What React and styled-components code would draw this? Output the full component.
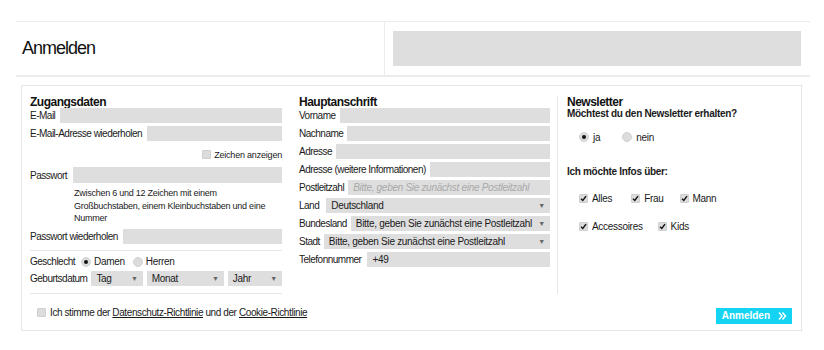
import React, { useState } from "react";
import styled, { createGlobalStyle } from "styled-components";

const GlobalStyle = createGlobalStyle`
  * { box-sizing: border-box; }
  body {
    margin: 0;
    background: #fff;
    font-family: "Liberation Sans", Arial, sans-serif;
    color: #1a1a1a;
  }
`;

const Page = styled.div`
  width: 824px;
  padding: 21px 14px 0 16px;
`;

// kopfzeile mit titel und grauem balken
const Header = styled.div`
  display: flex;
  height: 56px;
  border-top: 1px solid #ececec;
  border-bottom: 2px solid #ececec;
`;

const HeaderTitle = styled.div`
  width: 369px;
  display: flex;
  align-items: center;
  padding-left: 6px;
  font-size: 18px;
  letter-spacing: -1px;
  color: #111;
  border-right: 1px solid #ececec;
`;

const HeaderSlot = styled.div`
  flex: 1;
  padding: 9px 9px 9px 8px;
`;

const GreyBar = styled.div`
  height: 100%;
  background: #dedede;
`;

const Panel = styled.div`
  margin: 8px 8px 0 5px;
  border: 1px solid #e6e6e6;
  padding: 10px 9px 6px 8px;
`;

const Columns = styled.div`
  display: grid;
  grid-template-columns: 252px 251px 1fr;
  column-gap: 17px;
`;

const Column = styled.div`
  display: flex;
  flex-direction: column;
  ${(p) =>
    p.$divided &&
    `
    border-left: 1px solid #e6e6e6;
    margin-left: -10px;
    padding-left: 9px;
  `}
`;

const Heading = styled.div`
  font-size: 12px;
  font-weight: bold;
  letter-spacing: -0.5px;
  line-height: 12px;
  height: 12px;
  color: #111;
`;

const Row = styled.div`
  display: flex;
  align-items: center;
  gap: ${(p) => p.$gap ?? 5}px;
  height: ${(p) => p.$h ?? 15}px;
  margin-bottom: 3px;
`;

const Label = styled.span`
  font-size: 10px;
  letter-spacing: -0.5px;
  white-space: nowrap;
  color: #1a1a1a;
`;

const Field = styled.input`
  flex: 1;
  min-width: 0;
  height: 100%;
  border: 0;
  outline: 0;
  background: #dedede;
  padding: 0 5px;
  font-family: inherit;
  font-size: 10px;
  letter-spacing: -0.3px;
  color: #222;

  &::placeholder {
    font-style: italic;
    color: #a9a9a9;
  }
`;

const SelectBox = styled.div`
  display: flex;
  align-items: center;
  justify-content: space-between;
  height: 100%;
  background: #dedede;
  padding: 0 5px 0 5px;
  font-size: 10px;
  letter-spacing: -0.3px;
  color: #1a1a1a;
  white-space: nowrap;
  ${(p) => (p.$w ? `width: ${p.$w}px;` : "flex: 1; min-width: 0;")}

  &::after {
    content: "▼";
    font-size: 7px;
    color: #666;
    margin-left: 4px;
  }
`;

const Select = ({ children, w }) => <SelectBox $w={w}>{children}</SelectBox>;

const ShowRow = styled.div`
  display: flex;
  justify-content: flex-end;
  align-items: center;
  gap: 3px;
  margin: 4px 0 6px;
  height: 13px;
`;

const SmallText = styled.span`
  font-size: 9px;
  letter-spacing: -0.2px;
  color: #1a1a1a;
`;

const Help = styled.div`
  margin: 1px 0 4px 44px;
  font-size: 9px;
  letter-spacing: -0.25px;
  line-height: 12.5px;
  color: #1a1a1a;
`;

const Divider = styled.div`
  height: 1px;
  background: #e6e6e6;
  margin: ${(p) => p.$m || "5px 0 6px"};
`;

const Box = styled.span`
  display: inline-flex;
  align-items: center;
  justify-content: center;
  width: 9px;
  height: 9px;
  background: #dcdcdc;
  border: 1px solid #d0d0d0;
  border-radius: 1px;
  flex: none;
`;

const Check = ({ on }) => (
  <Box>
    {on && (
      <svg width="7" height="7" viewBox="0 0 7 7">
        <path d="M1 3.8 L2.8 5.5 L6 1.2" fill="none" stroke="#111" strokeWidth="1.4" />
      </svg>
    )}
  </Box>
);

const RadioDot = styled.span`
  display: inline-flex;
  align-items: center;
  justify-content: center;
  width: 10px;
  height: 10px;
  border-radius: 50%;
  background: #dcdcdc;
  border: 1px solid #d2d2d2;
  flex: none;

  &::after {
    content: "";
    width: 4px;
    height: 4px;
    border-radius: 50%;
    background: ${(p) => (p.$on ? "#111" : "transparent")};
  }
`;

const Option = styled.label`
  display: inline-flex;
  align-items: center;
  gap: ${(p) => p.$gap ?? 4}px;
  font-size: 10px;
  letter-spacing: -0.3px;
  margin-right: ${(p) => p.$mr ?? 0}px;
  cursor: pointer;
`;

const Question = styled.div`
  font-size: 10px;
  font-weight: bold;
  letter-spacing: -0.3px;
  margin-top: ${(p) => p.$mt ?? 0}px;
  height: 12px;
  line-height: 12px;
`;

const OptionLine = styled.div`
  display: flex;
  align-items: center;
  padding-left: 12px;
  height: 12px;
  margin-top: ${(p) => p.$mt}px;
`;

const Footer = styled.div`
  display: flex;
  align-items: center;
  justify-content: space-between;
  height: 30px;
  padding: 8px 0 0 7px;
`;

const Consent = styled.div`
  display: flex;
  align-items: center;
  gap: 4px;
  font-size: 10px;
  letter-spacing: -0.4px;

  a {
    color: #1a1a1a;
    text-decoration: underline;
  }
`;

const SubmitButton = styled.button`
  display: flex;
  align-items: center;
  gap: 8px;
  height: 16px;
  margin-top: 6px;
  padding: 0 5px 0 6px;
  border: 0;
  background: #15d3f3;
  color: #fff;
  font-family: "Liberation Sans", Arial, sans-serif;
  font-size: 10px;
  font-weight: bold;
  cursor: pointer;
`;

export default function App() {
  const [gender, setGender] = useState("damen");
  const [news, setNews] = useState("ja");

  return (
    <>
      <GlobalStyle />
      <Page>
        <Header>
          <HeaderTitle>Anmelden</HeaderTitle>
          <HeaderSlot>
            <GreyBar />
          </HeaderSlot>
        </Header>

        <Panel>
          <Columns>
            <Column>
              <Heading>Zugangsdaten</Heading>
              <Row>
                <Label>E-Mail</Label>
                <Field />
              </Row>
              <Row>
                <Label>E-Mail-Adresse wiederholen</Label>
                <Field />
              </Row>
              <ShowRow>
                <Check />
                <SmallText>Zeichen anzeigen</SmallText>
              </ShowRow>
              <Row $h={16} $gap={6}>
                <Label>Passwort</Label>
                <Field type="password" />
              </Row>
              <Help>
                Zwischen 6 und 12 Zeichen mit einem
                <br />
                Großbuchstaben, einem Kleinbuchstaben und eine
                <br />
                Nummer
              </Help>
              <Row>
                <Label>Passwort wiederholen</Label>
                <Field type="password" />
              </Row>
              <Divider $m="3px 0 5px" />
              <Row $h={12} $gap={6}>
                <Label>Geschlecht</Label>
                <Option $gap={3} $mr={2} onClick={() => setGender("damen")}>
                  <RadioDot $on={gender === "damen"} />
                  Damen
                </Option>
                <Option $gap={3} onClick={() => setGender("herren")}>
                  <RadioDot $on={gender === "herren"} />
                  Herren
                </Option>
              </Row>
              <Row $gap={4}>
                <Label>Geburtsdatum</Label>
                <Select w={52}>Tag</Select>
                <Select w={78}>Monat</Select>
                <Select w={55}>Jahr</Select>
              </Row>
              <Divider $m="4px 0 0" />
            </Column>

            <Column>
              <Heading>Hauptanschrift</Heading>
              <Row $gap={4}>
                <Label>Vorname</Label>
                <Field />
              </Row>
              <Row $gap={4}>
                <Label>Nachname</Label>
                <Field />
              </Row>
              <Row $gap={4}>
                <Label>Adresse</Label>
                <Field />
              </Row>
              <Row $gap={4}>
                <Label>Adresse (weitere Informationen)</Label>
                <Field />
              </Row>
              <Row $gap={4}>
                <Label>Postleitzahl</Label>
                <Field placeholder="Bitte, geben Sie zunächst eine Postleitzahl" />
              </Row>
              <Row $gap={7}>
                <Label>Land</Label>
                <Select>Deutschland</Select>
              </Row>
              <Row $gap={4}>
                <Label>Bundesland</Label>
                <Select>Bitte, geben Sie zunächst eine Postleitzahl</Select>
              </Row>
              <Row $gap={4}>
                <Label>Stadt</Label>
                <Select>Bitte, geben Sie zunächst eine Postleitzahl</Select>
              </Row>
              <Row $gap={6}>
                <Label>Telefonnummer</Label>
                <Field defaultValue="+49" />
              </Row>
            </Column>

            <Column $divided>
              <Heading>Newsletter</Heading>
              <Question>Möchtest du den Newsletter erhalten?</Question>
              <OptionLine $mt={11}>
                <Option $mr={22} onClick={() => setNews("ja")}>
                  <RadioDot $on={news === "ja"} />
                  ja
                </Option>
                <Option onClick={() => setNews("nein")}>
                  <RadioDot $on={news === "nein"} />
                  nein
                </Option>
              </OptionLine>
              <Question $mt={23}>Ich möchte Infos über:</Question>
              <OptionLine $mt={14}>
                <Option $mr={19}>
                  <Check on />
                  Alles
                </Option>
                <Option $mr={16}>
                  <Check on />
                  Frau
                </Option>
                <Option>
                  <Check on />
                  Mann
                </Option>
              </OptionLine>
              <OptionLine $mt={16}>
                <Option $mr={15}>
                  <Check on />
                  Accessoires
                </Option>
                <Option>
                  <Check on />
                  Kids
                </Option>
              </OptionLine>
            </Column>
          </Columns>

          <Footer>
            <Consent>
              <Check />
              <span>
                Ich stimme der <a href="#">Datenschutz-Richtlinie</a> und der{" "}
                <a href="#">Cookie-Richtlinie</a>
              </span>
            </Consent>
            <SubmitButton>
              Anmelden
              <svg width="9" height="8" viewBox="0 0 9 8">
                <path
                  d="M1 0.5 L4 4 L1 7.5 M4.5 0.5 L7.5 4 L4.5 7.5"
                  fill="none"
                  stroke="#fff"
                  strokeWidth="1.5"
                />
              </svg>
            </SubmitButton>
          </Footer>
        </Panel>
      </Page>
    </>
  );
}
